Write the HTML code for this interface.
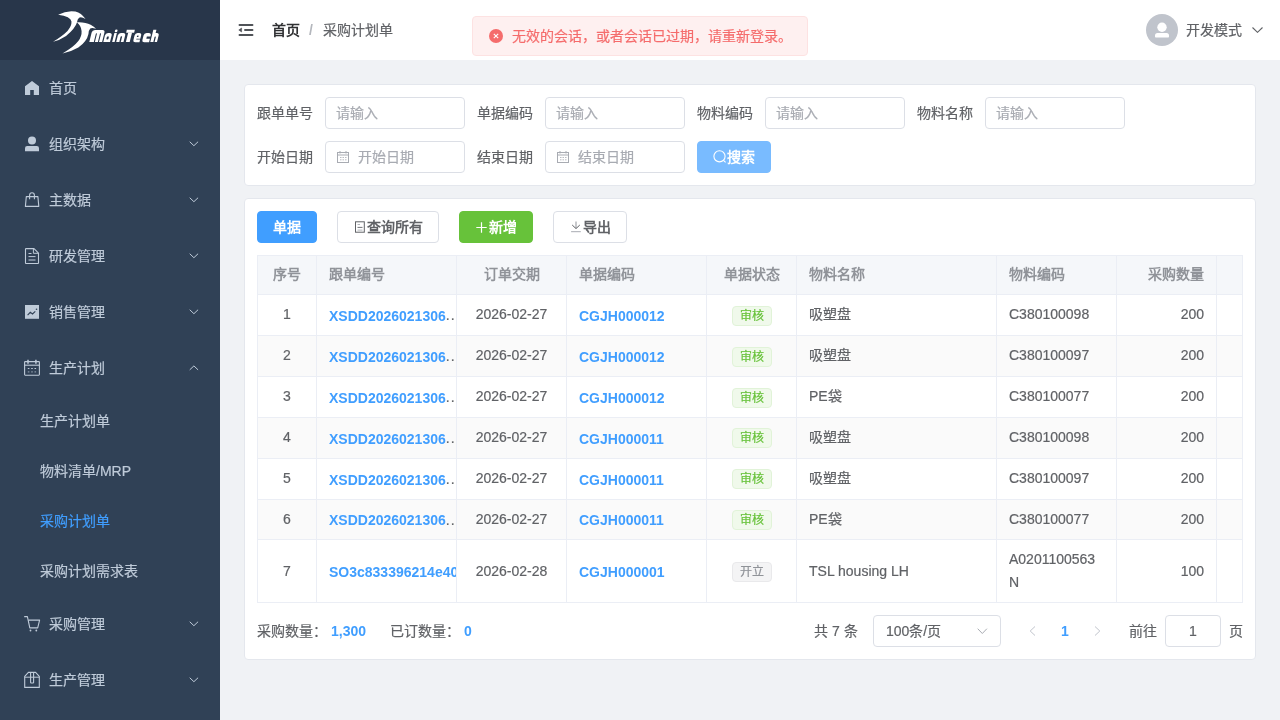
<!DOCTYPE html>
<html lang="zh-CN"><head><meta charset="utf-8"><style>
*{box-sizing:border-box;margin:0;padding:0}
html,body{width:1280px;height:720px;overflow:hidden;font-family:"Liberation Sans",sans-serif;font-size:14px;color:#606266;background:#f0f2f5}
.a{position:absolute}
#side{position:absolute;left:0;top:0;width:220px;height:720px;background:#304156}
#logo{position:absolute;left:0;top:0;width:220px;height:60px;background:#28364a}
.mi{position:absolute;left:0;width:220px;height:20px;line-height:20px;color:#bfcbd9;font-size:14px}
.mi .t{position:absolute;left:49px;top:0;white-space:nowrap}
.mi svg.ic{position:absolute;left:24px}
.mi svg.ch{position:absolute;left:189px;top:7px}
.sub .t{left:40px}
#header{position:absolute;left:220px;top:0;width:1060px;height:60px;background:#fff}
.card{position:absolute;background:#fff;border:1px solid #e4e7ed;border-radius:4px}
.lbl{position:absolute;height:20px;line-height:20px;color:#606266;white-space:nowrap}
.inp{position:absolute;width:140px;height:32px;border:1px solid #dcdfe6;border-radius:4px;background:#fff;color:#a8abb2;line-height:30px;padding-left:10px;white-space:nowrap}
.btn{position:absolute;height:32px;border-radius:4px;line-height:30px;text-align:center;font-size:14px;font-weight:bold;white-space:nowrap}
.hl{position:absolute;background:#ebeef5}
.cell{position:absolute;height:20px;line-height:20px;white-space:nowrap;overflow:hidden}
.th{color:#909399;font-weight:bold}
.lk{color:#409eff;font-weight:bold}
.tag{position:absolute;width:40px;height:20px;line-height:18px;border-radius:4px;font-size:12px;text-align:center}
#root *{-webkit-text-stroke:0.2px currentColor}
#root .th,#root .btn,#root .nb,#root .lk{-webkit-text-stroke:0}
.ok{background:#f0f9eb;border:1px solid #e1f3d8;color:#67c23a}
.info{background:#f4f4f5;border:1px solid #e9e9eb;color:#909399}
</style></head><body><div id="root" style="position:absolute;left:0;top:0;width:1280px;height:720px;will-change:transform">
<div id="side">
<div id="logo">
<svg class="a" style="left:48px;top:5px" width="52" height="52" viewBox="0 0 720 720">
<path fill="#fff" d="M140,135 Q260,70 380,90 Q460,110 520,195 Q465,160 430,175 Q405,195 402,240 Q378,325 250,430 Q160,490 70,510 Q200,430 270,360 Q330,290 325,230 Q315,160 140,135 Z"/>
<path fill="#fff" d="M400,240 Q520,235 590,275 Q640,300 665,330 Q610,310 585,325 Q565,345 560,400 Q540,500 420,590 Q320,650 200,670 Q350,590 420,500 Q470,430 465,360 Q460,290 400,240 Z"/>
</svg>
<svg class="a" style="left:80px;top:20px" width="90" height="30" viewBox="80 20 90 30">
<g transform="translate(0,42) skewX(-14) translate(0,-42)" fill="#fff">
<path d="M89.3,42 V32.6 Q89.3,30 92,30 H99.5 Q102.1,30 102.1,32.8 V42 Z"/>
<path d="M103.3,42 V35.5 Q103.3,33 105.8,33 H107.5 Q110,33 110,35.5 V42 Z"/>
<rect x="112.1" y="33" width="2.5" height="9"/>
<circle cx="113.4" cy="30.9" r="1.35"/>
<path d="M116.2,42 V35.5 Q116.2,33 118.7,33 H121 Q123.5,33 123.5,35.5 V42 Z"/>
<rect x="123.8" y="29.8" width="8" height="2.9"/>
<rect x="125.9" y="32.5" width="3.8" height="9.5"/>
<path d="M132.9,39.7 V35.5 Q132.9,33 135.4,33 H137 Q139.5,33 139.5,35.5 V38.8 H135.6 V39.5 H139.5 V42.2 H135.4 Q132.9,42.2 132.9,39.7 Z"/>
<path d="M141.9,39.7 V35.5 Q141.9,33 144.4,33 H146.6 Q149.1,33 149.1,35.5 V36.6 H145.5 V38.7 H149.1 V42.2 H144.4 Q141.9,42.2 141.9,39.7 Z"/>
<path d="M150.3,42 V29.8 H153.4 V33 H154.6 Q157,33 157,35.5 V42 Z"/>
</g>
<g transform="translate(0,42) skewX(-14) translate(0,-42)" fill="#28364a">
<rect x="93.8" y="33.3" width="1.1" height="8.7" rx="0.5"/>
<rect x="97.9" y="33.3" width="1.1" height="8.7" rx="0.5"/>
<ellipse cx="106.6" cy="37.9" rx="1.1" ry="1.7"/>
<rect x="119.3" y="36.2" width="1.5" height="5.8" rx="0.6"/>
<rect x="135.5" y="35.4" width="1.6" height="1.6" rx="0.6"/>
<rect x="153.3" y="36.4" width="1.3" height="5.6" rx="0.6"/>
</g>
</svg>
</div>
<div class="mi" style="top:78px"><span class="t">首页</span></div>
<div class="mi" style="top:134px"><span class="t">组织架构</span><svg class="ch" width="10" height="6" viewBox="0 0 10 6"><path d="M1,1 L4.9,4.7 L8.8,1" fill="none" stroke="#bfcbd9" stroke-width="1" stroke-linecap="round" stroke-linejoin="round"/></svg></div>
<div class="mi" style="top:190px"><span class="t">主数据</span><svg class="ch" width="10" height="6" viewBox="0 0 10 6"><path d="M1,1 L4.9,4.7 L8.8,1" fill="none" stroke="#bfcbd9" stroke-width="1" stroke-linecap="round" stroke-linejoin="round"/></svg></div>
<div class="mi" style="top:246px"><span class="t">研发管理</span><svg class="ch" width="10" height="6" viewBox="0 0 10 6"><path d="M1,1 L4.9,4.7 L8.8,1" fill="none" stroke="#bfcbd9" stroke-width="1" stroke-linecap="round" stroke-linejoin="round"/></svg></div>
<div class="mi" style="top:302px"><span class="t">销售管理</span><svg class="ch" width="10" height="6" viewBox="0 0 10 6"><path d="M1,1 L4.9,4.7 L8.8,1" fill="none" stroke="#bfcbd9" stroke-width="1" stroke-linecap="round" stroke-linejoin="round"/></svg></div>
<div class="mi" style="top:358px"><span class="t">生产计划</span><svg class="ch" width="10" height="6" viewBox="0 0 10 6"><path d="M1,4.6 L4.9,0.9 L8.8,4.6" fill="none" stroke="#bfcbd9" stroke-width="1" stroke-linecap="round" stroke-linejoin="round"/></svg></div>
<div class="mi sub" style="top:411px;"><span class="t">生产计划单</span></div>
<div class="mi sub" style="top:461px;"><span class="t">物料清单/MRP</span></div>
<div class="mi sub" style="top:511px;color:#409eff"><span class="t">采购计划单</span></div>
<div class="mi sub" style="top:561px;"><span class="t">采购计划需求表</span></div>
<div class="mi" style="top:614px"><span class="t">采购管理</span><svg class="ch" width="10" height="6" viewBox="0 0 10 6"><path d="M1,1 L4.9,4.7 L8.8,1" fill="none" stroke="#bfcbd9" stroke-width="1" stroke-linecap="round" stroke-linejoin="round"/></svg></div>
<div class="mi" style="top:670px"><span class="t">生产管理</span><svg class="ch" width="10" height="6" viewBox="0 0 10 6"><path d="M1,1 L4.9,4.7 L8.8,1" fill="none" stroke="#bfcbd9" stroke-width="1" stroke-linecap="round" stroke-linejoin="round"/></svg></div>
<svg class="a" style="left:0;top:0" width="220" height="720" viewBox="0 0 220 720">
<path d="M32,81 L39,86.3 L39,95 L33.8,95 L33.8,90 L30.2,90 L30.2,95 L25,95 L25,86.3 Z" fill="#bfcbd9"/>
<circle cx="32" cy="140.5" r="4" fill="#bfcbd9"/>
<path d="M25,148.2 Q25,146 27.2,146 L36.8,146 Q39,146 39,148.2 L39,151.2 L25,151.2 Z" fill="#bfcbd9"/>
<path d="M26.3,196.6 H37.9 L38.8,206.4 H25.4 Z" fill="none" stroke="#bfcbd9" stroke-width="1.1" stroke-linejoin="round"/>
<path d="M29.6,199.3 V195.3 Q29.6,192.8 32,192.8 Q34.4,192.8 34.4,195.3 V199.3" fill="none" stroke="#bfcbd9" stroke-width="1.1"/>
<path d="M26.2,248.6 H34 L38.5,253.2 V263 Q38.5,263.5 38,263.5 H26 Q25.5,263.5 25.5,263 V249.1 Q25.5,248.6 26.2,248.6 Z" fill="none" stroke="#bfcbd9" stroke-width="1.1" stroke-linejoin="round"/>
<path d="M33.4,248.8 V253.3 H38.3" fill="none" stroke="#bfcbd9" stroke-width="1"/>
<path d="M28.5,253.5 H31.5 M28.5,256.6 H35.5" stroke="#bfcbd9" stroke-width="1"/>
<path d="M28.5,260 H35.5" stroke="#bfcbd9" stroke-width="1.4" opacity="0.75"/>
<rect x="25" y="305" width="14" height="13.8" fill="#bfcbd9"/>
<path d="M27.6,315.2 L30.3,312.3 L32.5,314 L35.3,311.3" fill="none" stroke="#304156" stroke-width="1.1"/>
<circle cx="36.5" cy="309.2" r="0.8" fill="#304156"/>
<rect x="24.6" y="361.6" width="14.8" height="13.6" rx="0.6" fill="none" stroke="#bfcbd9" stroke-width="1.1"/>
<path d="M24.6,365.2 H39.4" stroke="#bfcbd9" stroke-width="1.1"/>
<path d="M28,359.8 V363.8 M35.9,359.8 V363.8" stroke="#bfcbd9" stroke-width="1.5"/>
<path d="M27.8,368.5 H29.4 M31.2,368.5 H32.8 M34.5,368.5 H36.1" stroke="#bfcbd9" stroke-width="1"/>
<path d="M27.8,371.9 H29.4 M31.2,371.9 H32.8 M34.5,371.9 H36.1" stroke="#bfcbd9" stroke-width="1.1" opacity="0.6"/>
<path d="M24.2,616.6 H27.4 L29.8,627.9 H37.7 L39.6,620.1 H28.8" fill="none" stroke="#bfcbd9" stroke-width="1.1" stroke-linejoin="round"/>
<circle cx="30.5" cy="630.5" r="0.9" fill="#bfcbd9"/>
<circle cx="36.3" cy="630.5" r="0.9" fill="#bfcbd9"/>
<path d="M24.7,676.3 L28.4,672.4 H35.6 L39.3,676.3 V687.4 H24.7 Z" fill="none" stroke="#bfcbd9" stroke-width="1.1" stroke-linejoin="round"/>
<path d="M24.7,677.2 H39.3" stroke="#bfcbd9" stroke-width="1"/>
<path d="M30.6,672.4 V682.4 Q30.6,683 31.2,683 H33 Q33.6,683 33.6,682.4 V672.4" fill="none" stroke="#bfcbd9" stroke-width="1.1"/>
</svg>
</div>
<div id="header">
<svg class="a" style="left:18px;top:23px" width="16" height="14" viewBox="0 0 16 14"><path d="M1.5,2 H14.5 M7,7 H14.5 M1.5,12 H14.5" stroke="#505358" stroke-width="1.9" stroke-linecap="round"/><path d="M0.8,7 L3.6,5 L3.6,9 Z" fill="#505358" stroke="#505358" stroke-width="0.6" stroke-linejoin="round"/></svg>
<div class="a nb" style="left:52px;top:20px;line-height:20px;font-weight:bold;color:#303133">首页</div>
<div class="a nb" style="left:89px;top:20px;line-height:20px;color:#b4b7bd;font-weight:bold">/</div>
<div class="a" style="left:103px;top:20px;line-height:20px;color:#606266">采购计划单</div>
<div class="a" style="left:252px;top:16px;width:336px;height:40px;background:#fef0f0;border:1px solid #fde2e2;border-radius:4px"></div>
<svg class="a" style="left:269px;top:29px" width="14" height="14" viewBox="0 0 14 14"><circle cx="7" cy="7" r="7" fill="#f56c6c"/><path d="M4.8,4.8 L9.2,9.2 M9.2,4.8 L4.8,9.2" stroke="#fff" stroke-width="1.1"/></svg>
<div class="a" style="left:292px;top:26px;line-height:20px;color:#f56c6c">无效的会话，或者会话已过期，请重新登录。</div>
<svg class="a" style="left:926px;top:14px" width="32" height="32" viewBox="0 0 32 32"><circle cx="16" cy="16" r="16" fill="#c0c4cc"/><circle cx="16" cy="13.3" r="4.7" fill="#fff"/><path d="M9,21.5 Q9,19 11.5,19 L20.5,19 Q23,19 23,21.5 L23,22.8 Q23,23.6 22.2,23.6 L9.8,23.6 Q9,23.6 9,22.8 Z" fill="#fff"/></svg>
<div class="a" style="left:966px;top:20px;line-height:20px;color:#606266">开发模式</div>
<svg class="a" style="left:1032px;top:27px" width="11" height="6" viewBox="0 0 11 6"><path d="M0.5,0.5 L5.5,5.3 L10.5,0.5" fill="none" stroke="#606266" stroke-width="1.1"/></svg>
</div>
<div class="card" style="left:244px;top:84px;width:1012px;height:102px"></div>
<div class="lbl" style="left:257px;top:103px">跟单单号</div>
<div class="inp" style="left:325px;top:97px">请输入</div>
<div class="lbl" style="left:477px;top:103px">单据编码</div>
<div class="inp" style="left:545px;top:97px">请输入</div>
<div class="lbl" style="left:697px;top:103px">物料编码</div>
<div class="inp" style="left:765px;top:97px">请输入</div>
<div class="lbl" style="left:917px;top:103px">物料名称</div>
<div class="inp" style="left:985px;top:97px">请输入</div>
<div class="lbl" style="left:257px;top:147px">开始日期</div>
<div class="inp" style="left:325px;top:141px;padding-left:32px">开始日期</div>
<svg class="a" style="left:337px;top:151px" width="12" height="12" viewBox="0 0 12 12"><rect x="0.5" y="1.5" width="11" height="10" fill="none" stroke="#a8abb2" stroke-width="1"/><path d="M0.5,4 H11.5 M3,0 V2.5 M9,0 V2.5" stroke="#a8abb2" stroke-width="1"/><path d="M3,6.5 H4.5 M5.5,6.5 H7 M8,6.5 H9.5 M3,8.8 H4.5 M5.5,8.8 H7 M8,8.8 H9.5" stroke="#a8abb2" stroke-width="0.8"/></svg><div class="lbl" style="left:477px;top:147px">结束日期</div>
<div class="inp" style="left:545px;top:141px;padding-left:32px">结束日期</div>
<svg class="a" style="left:557px;top:151px" width="12" height="12" viewBox="0 0 12 12"><rect x="0.5" y="1.5" width="11" height="10" fill="none" stroke="#a8abb2" stroke-width="1"/><path d="M0.5,4 H11.5 M3,0 V2.5 M9,0 V2.5" stroke="#a8abb2" stroke-width="1"/><path d="M3,6.5 H4.5 M5.5,6.5 H7 M8,6.5 H9.5 M3,8.8 H4.5 M5.5,8.8 H7 M8,8.8 H9.5" stroke="#a8abb2" stroke-width="0.8"/></svg><div class="btn" style="left:697px;top:141px;width:74px;background:#79bbff;border:1px solid #79bbff;color:#fff"></div>
<svg class="a" style="left:713px;top:150px" width="14" height="14" viewBox="0 0 14 14"><circle cx="6.5" cy="6.3" r="5.6" fill="none" stroke="#fff" stroke-width="1.1"/><path d="M10.5,10.3 L12.6,12.4" stroke="#fff" stroke-width="1.1"/></svg>
<div class="a nb" style="left:727px;top:147px;line-height:20px;color:#fff;font-weight:bold">搜索</div>
<div class="card" style="left:244px;top:198px;width:1012px;height:462px"></div>
<div class="btn" style="left:257px;top:211px;width:60px;background:#409eff;border:1px solid #409eff;color:#fff">单据</div>
<div class="btn" style="left:337px;top:211px;width:102px;background:#fff;border:1px solid #dcdfe6;color:#606266;padding-left:14px">查询所有</div>
<svg class="a" style="left:350px;top:215px" width="20" height="25" viewBox="350 215 20 25"><rect x="355.5" y="221.8" width="8.8" height="10.4" fill="none" stroke="#606266" stroke-width="1"/><path d="M357.5,224.5 H360 M357.5,230.1 H362.5" stroke="#a8abb2" stroke-width="0.9"/><path d="M357.5,227.4 H362.5" stroke="#606266" stroke-width="0.9"/></svg>
<div class="btn" style="left:459px;top:211px;width:74px;background:#67c23a;border:1px solid #67c23a;color:#fff;padding-left:14px">新增</div>
<svg class="a" style="left:476px;top:222px" width="11" height="11" viewBox="0 0 11 11"><path d="M5.5,0.3 V10.7 M0.3,5.5 H10.7" stroke="#fff" stroke-width="1.2"/></svg>
<div class="btn" style="left:553px;top:211px;width:74px;background:#fff;border:1px solid #dcdfe6;color:#606266;padding-left:14px">导出</div>
<svg class="a" style="left:565px;top:215px" width="20" height="25" viewBox="565 215 20 25"><path d="M576,221.5 V228" stroke="#909399" stroke-width="1"/><path d="M572.2,225 L576,228.6 L579.8,225" fill="none" stroke="#606266" stroke-width="1"/><path d="M571.1,231.7 H580.8" stroke="#a8abb2" stroke-width="1"/></svg>
<div class="a" style="left:257px;top:255px;width:986px;height:40px;background:#f5f7fa"></div>
<div class="a" style="left:257px;top:336px;width:986px;height:40px;background:#fafafa"></div>
<div class="a" style="left:257px;top:418px;width:986px;height:40px;background:#fafafa"></div>
<div class="a" style="left:257px;top:500px;width:986px;height:39px;background:#fafafa"></div>
<div class="hl" style="left:257px;top:255px;width:986px;height:1px"></div>
<div class="hl" style="left:257px;top:294px;width:986px;height:1px"></div>
<div class="hl" style="left:257px;top:335px;width:986px;height:1px"></div>
<div class="hl" style="left:257px;top:376px;width:986px;height:1px"></div>
<div class="hl" style="left:257px;top:417px;width:986px;height:1px"></div>
<div class="hl" style="left:257px;top:458px;width:986px;height:1px"></div>
<div class="hl" style="left:257px;top:499px;width:986px;height:1px"></div>
<div class="hl" style="left:257px;top:539px;width:986px;height:1px"></div>
<div class="hl" style="left:257px;top:602px;width:986px;height:1px"></div>
<div class="hl" style="left:257px;top:255px;width:1px;height:348px"></div>
<div class="hl" style="left:316px;top:255px;width:1px;height:348px"></div>
<div class="hl" style="left:456px;top:255px;width:1px;height:348px"></div>
<div class="hl" style="left:566px;top:255px;width:1px;height:348px"></div>
<div class="hl" style="left:706px;top:255px;width:1px;height:348px"></div>
<div class="hl" style="left:796px;top:255px;width:1px;height:348px"></div>
<div class="hl" style="left:996px;top:255px;width:1px;height:348px"></div>
<div class="hl" style="left:1116px;top:255px;width:1px;height:348px"></div>
<div class="hl" style="left:1216px;top:255px;width:1px;height:348px"></div>
<div class="hl" style="left:1242px;top:255px;width:1px;height:348px"></div>
<div class="cell th" style="left:270px;width:34px;top:264.0px;text-align:center;">序号</div>
<div class="cell th" style="left:329px;width:115px;top:264.0px;text-align:left;">跟单编号</div>
<div class="cell th" style="left:469px;width:85px;top:264.0px;text-align:center;">订单交期</div>
<div class="cell th" style="left:579px;width:115px;top:264.0px;text-align:left;">单据编码</div>
<div class="cell th" style="left:719px;width:65px;top:264.0px;text-align:center;">单据状态</div>
<div class="cell th" style="left:809px;width:175px;top:264.0px;text-align:left;">物料名称</div>
<div class="cell th" style="left:1009px;width:95px;top:264.0px;text-align:left;">物料编码</div>
<div class="cell th" style="left:1129px;width:75px;top:264.0px;text-align:right;">采购数量</div>
<div class="cell " style="left:270px;width:34px;top:304.0px;text-align:center;color:#606266">1</div>
<div class="cell lk" style="left:329px;width:128px;top:305.5px">XSDD2026021306<span style="color:#606266;font-weight:normal;letter-spacing:1px;position:relative;top:-0.5px">..</span></div>
<div class="cell " style="left:469px;width:85px;top:304.0px;text-align:center;">2026-02-27</div>
<div class="cell lk" style="left:579px;width:115px;top:304.0px;text-align:left;margin-top:1.5px">CGJH000012</div>
<div class="tag ok" style="left:732px;top:306px">审核</div>
<div class="cell " style="left:809px;width:175px;top:304.0px;text-align:left;">吸塑盘</div>
<div class="cell " style="left:1009px;width:95px;top:304.0px;text-align:left;">C380100098</div>
<div class="cell " style="left:1129px;width:75px;top:304.0px;text-align:right;">200</div>
<div class="cell " style="left:270px;width:34px;top:345.0px;text-align:center;color:#606266">2</div>
<div class="cell lk" style="left:329px;width:128px;top:346.5px">XSDD2026021306<span style="color:#606266;font-weight:normal;letter-spacing:1px;position:relative;top:-0.5px">..</span></div>
<div class="cell " style="left:469px;width:85px;top:345.0px;text-align:center;">2026-02-27</div>
<div class="cell lk" style="left:579px;width:115px;top:345.0px;text-align:left;margin-top:1.5px">CGJH000012</div>
<div class="tag ok" style="left:732px;top:347px">审核</div>
<div class="cell " style="left:809px;width:175px;top:345.0px;text-align:left;">吸塑盘</div>
<div class="cell " style="left:1009px;width:95px;top:345.0px;text-align:left;">C380100097</div>
<div class="cell " style="left:1129px;width:75px;top:345.0px;text-align:right;">200</div>
<div class="cell " style="left:270px;width:34px;top:386.0px;text-align:center;color:#606266">3</div>
<div class="cell lk" style="left:329px;width:128px;top:387.5px">XSDD2026021306<span style="color:#606266;font-weight:normal;letter-spacing:1px;position:relative;top:-0.5px">..</span></div>
<div class="cell " style="left:469px;width:85px;top:386.0px;text-align:center;">2026-02-27</div>
<div class="cell lk" style="left:579px;width:115px;top:386.0px;text-align:left;margin-top:1.5px">CGJH000012</div>
<div class="tag ok" style="left:732px;top:388px">审核</div>
<div class="cell " style="left:809px;width:175px;top:386.0px;text-align:left;">PE袋</div>
<div class="cell " style="left:1009px;width:95px;top:386.0px;text-align:left;">C380100077</div>
<div class="cell " style="left:1129px;width:75px;top:386.0px;text-align:right;">200</div>
<div class="cell " style="left:270px;width:34px;top:427.0px;text-align:center;color:#606266">4</div>
<div class="cell lk" style="left:329px;width:128px;top:428.5px">XSDD2026021306<span style="color:#606266;font-weight:normal;letter-spacing:1px;position:relative;top:-0.5px">..</span></div>
<div class="cell " style="left:469px;width:85px;top:427.0px;text-align:center;">2026-02-27</div>
<div class="cell lk" style="left:579px;width:115px;top:427.0px;text-align:left;margin-top:1.5px">CGJH000011</div>
<div class="tag ok" style="left:732px;top:428px">审核</div>
<div class="cell " style="left:809px;width:175px;top:427.0px;text-align:left;">吸塑盘</div>
<div class="cell " style="left:1009px;width:95px;top:427.0px;text-align:left;">C380100098</div>
<div class="cell " style="left:1129px;width:75px;top:427.0px;text-align:right;">200</div>
<div class="cell " style="left:270px;width:34px;top:468.0px;text-align:center;color:#606266">5</div>
<div class="cell lk" style="left:329px;width:128px;top:469.5px">XSDD2026021306<span style="color:#606266;font-weight:normal;letter-spacing:1px;position:relative;top:-0.5px">..</span></div>
<div class="cell " style="left:469px;width:85px;top:468.0px;text-align:center;">2026-02-27</div>
<div class="cell lk" style="left:579px;width:115px;top:468.0px;text-align:left;margin-top:1.5px">CGJH000011</div>
<div class="tag ok" style="left:732px;top:469px">审核</div>
<div class="cell " style="left:809px;width:175px;top:468.0px;text-align:left;">吸塑盘</div>
<div class="cell " style="left:1009px;width:95px;top:468.0px;text-align:left;">C380100097</div>
<div class="cell " style="left:1129px;width:75px;top:468.0px;text-align:right;">200</div>
<div class="cell " style="left:270px;width:34px;top:508.5px;text-align:center;color:#606266">6</div>
<div class="cell lk" style="left:329px;width:128px;top:510.0px">XSDD2026021306<span style="color:#606266;font-weight:normal;letter-spacing:1px;position:relative;top:-0.5px">..</span></div>
<div class="cell " style="left:469px;width:85px;top:508.5px;text-align:center;">2026-02-27</div>
<div class="cell lk" style="left:579px;width:115px;top:508.5px;text-align:left;margin-top:1.5px">CGJH000011</div>
<div class="tag ok" style="left:732px;top:510px">审核</div>
<div class="cell " style="left:809px;width:175px;top:508.5px;text-align:left;">PE袋</div>
<div class="cell " style="left:1009px;width:95px;top:508.5px;text-align:left;">C380100077</div>
<div class="cell " style="left:1129px;width:75px;top:508.5px;text-align:right;">200</div>
<div class="cell " style="left:270px;width:34px;top:561.0px;text-align:center;color:#606266">7</div>
<div class="cell lk" style="left:329px;width:127px;top:561.5px">SO3c833396214e40</div>
<div class="cell " style="left:469px;width:85px;top:561.0px;text-align:center;">2026-02-28</div>
<div class="cell lk" style="left:579px;width:115px;top:561.0px;text-align:left;margin-top:0.5px">CGJH000001</div>
<div class="tag info" style="left:732px;top:562px">开立</div>
<div class="cell " style="left:809px;width:175px;top:561.0px;text-align:left;">TSL housing LH</div>
<div class="cell" style="left:1009px;width:96px;top:548.0px;height:46px;line-height:23px">A0201100563<br>N</div>
<div class="cell " style="left:1129px;width:75px;top:561.0px;text-align:right;">100</div>
<div class="a" style="left:257px;top:621px;line-height:20px">采购数量：</div>
<div class="a lk" style="left:331px;top:621px;line-height:20px">1,300</div>
<div class="a" style="left:390px;top:621px;line-height:20px">已订数量：</div>
<div class="a lk" style="left:464px;top:621px;line-height:20px">0</div>
<div class="a" style="left:814px;top:621px;line-height:20px">共 7 条</div>
<div class="a" style="left:873px;top:615px;width:128px;height:32px;border:1px solid #dcdfe6;border-radius:4px;background:#fff"></div>
<div class="a" style="left:886px;top:621px;line-height:20px">100条/页</div>
<svg class="a" style="left:977px;top:628px" width="11" height="7" viewBox="0 0 11 7"><path d="M0.7,0.7 L5.3,5.5 L9.9,0.7" fill="none" stroke="#a8abb2" stroke-width="1"/></svg>
<svg class="a" style="left:1029px;top:626px" width="7" height="10" viewBox="0 0 7 10"><path d="M6,0.5 L1.2,5 L6,9.5" fill="none" stroke="#c0c4cc" stroke-width="1"/></svg>
<div class="a lk" style="left:1061px;top:621px;line-height:20px">1</div>
<svg class="a" style="left:1094px;top:626px" width="7" height="10" viewBox="0 0 7 10"><path d="M1,0.5 L5.8,5 L1,9.5" fill="none" stroke="#c0c4cc" stroke-width="1"/></svg>
<div class="a" style="left:1129px;top:621px;line-height:20px">前往</div>
<div class="a" style="left:1165px;top:615px;width:56px;height:32px;border:1px solid #dcdfe6;border-radius:4px;background:#fff;text-align:center;line-height:30px">1</div>
<div class="a" style="left:1229px;top:621px;line-height:20px">页</div>
</div></body></html>
